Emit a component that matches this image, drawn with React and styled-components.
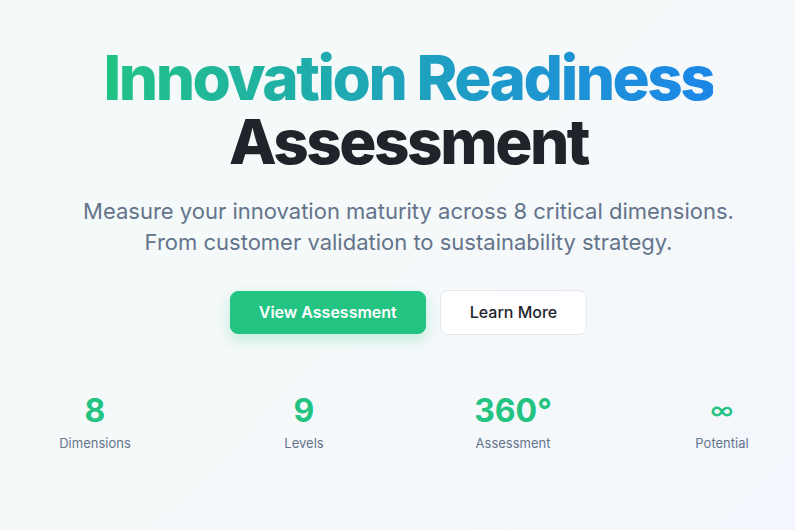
import React from "react";
import styled, { createGlobalStyle } from "styled-components";

const GlobalStyle = createGlobalStyle`
  html, body {
    margin: 0;
    padding: 0;
    overflow: hidden;
  }
  body {
    font-family: "Inter", "Liberation Sans", sans-serif;
    background: #f4f8fa;
  }
`;

const Page = styled.div`
  min-height: 530px;
  background: linear-gradient(135deg, #f3f9f8 0%, #f5f9fa 50%, #f3f7fd 100%);
  overflow: hidden;
`;

const Hero = styled.section`
  width: 817px;
  box-sizing: border-box;
  padding-top: 46px;
  display: flex;
  flex-direction: column;
  align-items: center;
`;

const Title = styled.h1`
  margin: 0;
  text-align: center;
  font-family: "Inter", sans-serif;
  font-weight: 800;
  font-size: 62px;
  line-height: 64px;
  letter-spacing: -2.5px;
`;

const Gradient = styled.span`
  display: inline-block;
  background: linear-gradient(90deg, #22c385 0%, #1e9fc2 55%, #1c86e8 100%);
  -webkit-background-clip: text;
  background-clip: text;
  color: transparent;
`;

const Dark = styled.span`
  display: block;
  color: #1f242b;
`;

const Lead = styled.p`
  margin: 22px 0 0;
  text-align: center;
  font-size: 22px;
  line-height: 1.4;
  color: #64748b;
`;

const Actions = styled.div`
  display: flex;
  align-items: center;
  gap: 14px;
  margin-top: 32px;
`;

const Button = styled.button`
  height: ${p => (p.$primary ? "43px" : "45px")};
  padding: 0 ${p => (p.$primary ? "28px" : "29px")};
  border-radius: 8px;
  font-family: "Inter", sans-serif;
  font-size: 16px;
  font-weight: ${p => (p.$primary ? 600 : 500)};
  cursor: pointer;
  border: 1px solid ${p => (p.$primary ? "#23c382" : "#e2e8f0")};
  background: ${p => (p.$primary ? "#23c382" : "#ffffff")};
  color: ${p => (p.$primary ? "#ffffff" : "#1f242b")};
  box-shadow: ${p =>
    p.$primary ? "0 6px 14px rgba(35, 195, 130, 0.25)" : "none"};
`;

const Stats = styled.div`
  display: grid;
  grid-template-columns: repeat(4, 190px);
  column-gap: 19px;
  margin-top: 56px;
`;

const Stat = styled.div`
  display: flex;
  flex-direction: column;
  align-items: center;
`;

const Value = styled.div`
  font-size: ${p => (p.$small ? "24px" : "32px")};
  font-weight: ${p => (p.$small ? 500 : 700)};
  line-height: 40px;
  color: #23c382;
`;

const Label = styled.div`
  margin-top: 4px;
  font-size: 13px;
  color: #64748b;
`;

const stats = [
  { value: "8", label: "Dimensions" },
  { value: "9", label: "Levels" },
  { value: "360°", label: "Assessment" },
  { value: "∞", label: "Potential", small: true },
];

export default function App() {
  return (
    <Page>
      <GlobalStyle />
      <Hero>
        <Title>
          <Gradient>Innovation Readiness</Gradient>
          <Dark>Assessment</Dark>
        </Title>
        <Lead>
          Measure your innovation maturity across 8 critical dimensions.
          <br />
          From customer validation to sustainability strategy.
        </Lead>
        <Actions>
          <Button $primary>View Assessment</Button>
          <Button>Learn More</Button>
        </Actions>
        <Stats>
          {stats.map(s => (
            <Stat key={s.label}>
              <Value $small={s.small}>{s.value}</Value>
              <Label>{s.label}</Label>
            </Stat>
          ))}
        </Stats>
      </Hero>
    </Page>
  );
}
